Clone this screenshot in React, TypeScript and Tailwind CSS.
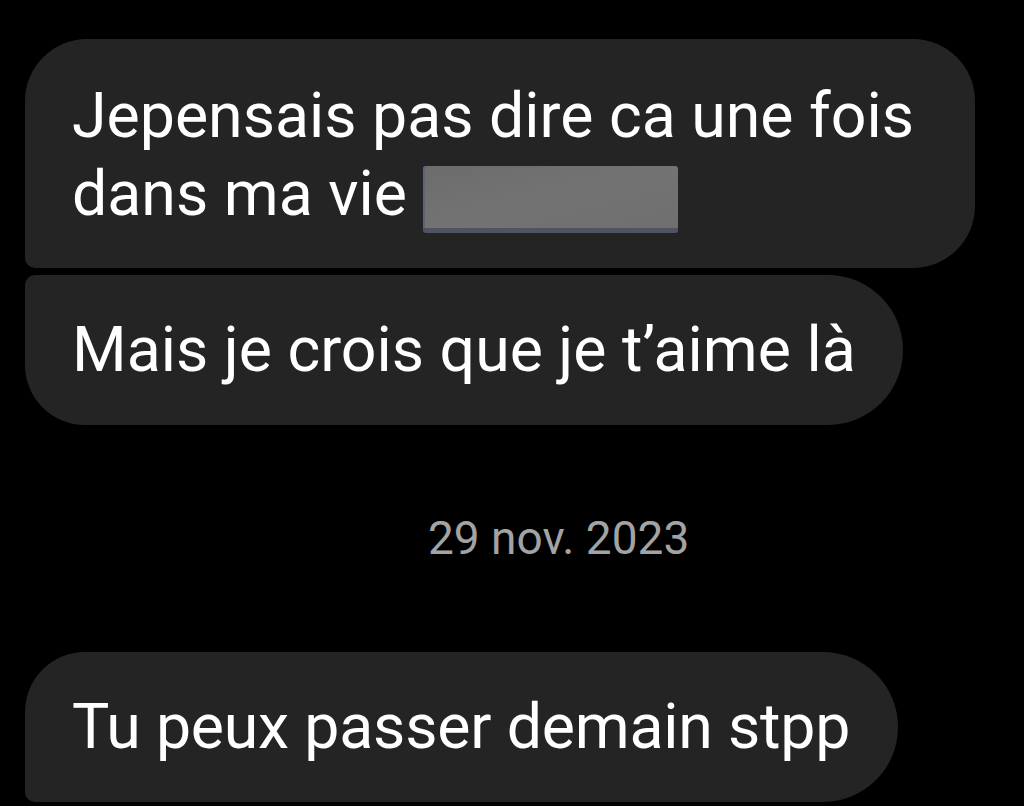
export default function App() {
  const bubble = "bg-[#242424] text-white font-['Roboto',sans-serif] text-[62.6px] pl-[47px]";

  return (
    <div className="w-[1024px] h-[806px] bg-black overflow-hidden flex flex-col pl-[25px] pt-[39px]">
      {/* first message, two lines */}
      <div className={`${bubble} w-[950px] h-[229px] rounded-[62px] rounded-bl-[10px] leading-[78px] pt-[38px]`}>
        <div>Jepensais pas dire ca une fois</div>
        <div className="flex items-start">
          <span>dans ma vie</span>
          <span className="ml-[16px] mt-[11px] inline-block w-[255px] h-[67px] rounded-[3px] bg-gradient-to-br from-[#6c6c6c] via-[#737373] to-[#6f6f6f] border-b-[5px] border-b-[#505462] shadow-[inset_2px_0_0_#5c6378]" />
        </div>
      </div>

      <div className={`${bubble} mt-[7px] w-[878px] h-[150px] rounded-r-[75px] rounded-tl-[10px] rounded-bl-[60px] flex items-center`}>
        Mais je crois que je t’aime là
      </div>

      {/* date separator */}
      <div className="h-[227px] flex items-center pl-[403px] font-['Roboto',sans-serif] text-[46px] text-[#a3a3a3]">
        29 nov. 2023
      </div>

      <div className={`${bubble} w-[873px] h-[150px] rounded-r-[75px] rounded-tl-[60px] rounded-bl-[10px] flex items-center tracking-[-0.2px]`}>
        Tu peux passer demain stpp
      </div>
    </div>
  );
}
